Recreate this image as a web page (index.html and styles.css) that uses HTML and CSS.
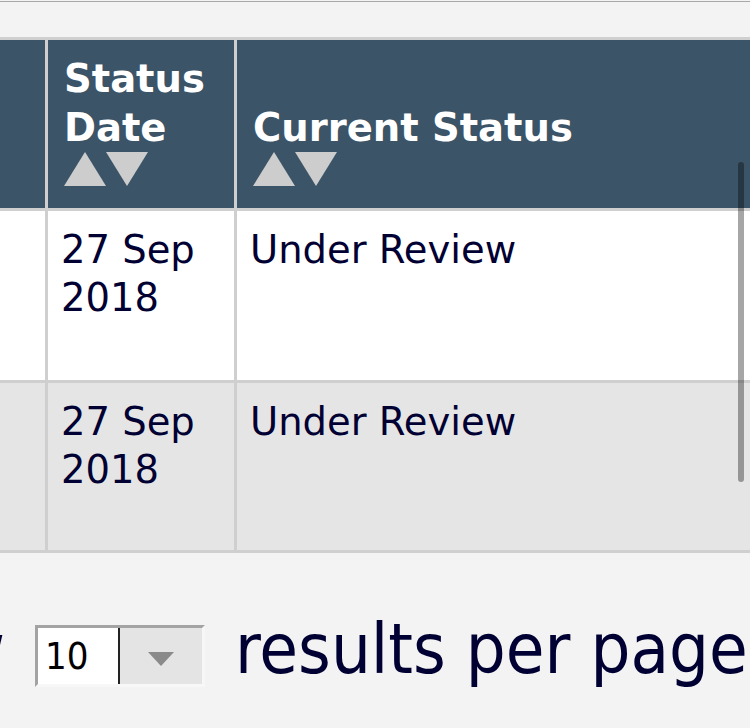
FILE: index.html
```html
<!DOCTYPE html>
<html>
<head>
<meta charset="utf-8">
<link rel="stylesheet" href="styles.css">
</head>
<body>
<div class="topline"></div>
<div class="viewport">
  <div class="table-wrap">
    <table class="grid">
      <thead>
        <tr>
          <th class="c1"><svg class="sort" width="84" height="34" viewBox="0 0 84 34"><polygon points="0,34 21,0 42,34"/><polygon points="42,0 84,0 63,34"/></svg></th>
          <th class="c2"><div class="th-text">Status<br>Date</div><svg class="sort" width="84" height="34" viewBox="0 0 84 34"><polygon points="0,34 21,0 42,34"/><polygon points="42,0 84,0 63,34"/></svg></th>
          <th class="c3"><div class="th-text">Current Status</div><svg class="sort" width="84" height="34" viewBox="0 0 84 34"><polygon points="0,34 21,0 42,34"/><polygon points="42,0 84,0 63,34"/></svg></th>
        </tr>
      </thead>
      <tbody>
        <tr class="row-odd">
          <td class="c1"></td>
          <td class="c2">27 Sep<br>2018</td>
          <td class="c3">Under Review</td>
        </tr>
        <tr class="row-even">
          <td class="c1"></td>
          <td class="c2">27 Sep<br>2018</td>
          <td class="c3">Under Review</td>
        </tr>
      </tbody>
    </table>
    <div class="scrollbar"></div>
  </div>
</div>
<div class="pager">
  <span class="show">Show</span>
  <div class="select">
    <div class="select-value">10</div>
    <div class="select-btn"><span class="caret"></span></div>
  </div>
  <span class="per-page">results per page</span>
</div>
</body>
</html>
```
FILE: styles.css
```css
html, body {
  margin: 0;
  padding: 0;
  background: #f3f3f3;
}
body {
  width: 750px;
  height: 728px;
  overflow: hidden;
  font-family: "DejaVu Sans", Verdana, sans-serif;
}
.topline {
  height: 1px;
  margin-top: 1px;
  background: #a9a9a9;
}
.viewport {
  overflow: hidden;
  padding-top: 35px;
}
.table-wrap {
  position: relative;
  width: 750px;
  overflow: hidden;
}
.grid {
  border-collapse: collapse;
  margin-left: -120px;
  width: 900px;
  border: 3px solid #cfcfcf;
  table-layout: fixed;
}
.grid .c1 { width: 136px; }
.grid .c2 { width: 160px; }
.grid .c3 { width: auto; }
.grid th, .grid td {
  border: 3px solid #cfcfcf;
  padding: 0 13px;
  text-align: left;
}
.grid th {
  background: #3b5467;
  color: #ffffff;
  font-weight: bold;
  font-size: 38.5px;
  line-height: 49px;
  vertical-align: bottom;
  height: 146px;
  padding: 0 10px 22px 16px;
}
.sort {
  display: block;
  fill: #cdcdcd;
  filter: blur(0.7px);
}
.grid td {
  font-size: 38.5px;
  line-height: 48px;
  color: #000033;
  vertical-align: top;
  padding-top: 15px;
}
.row-odd td { background: #ffffff; height: 154px; }
.row-even td { background: #e5e5e5; height: 152px; }
.scrollbar {
  position: absolute;
  left: 738px;
  top: 125px;
  width: 6px;
  height: 320px;
  border-radius: 3px;
  background: rgba(0, 0, 0, 0.35);
}
.pager {
  display: flex;
  align-items: flex-start;
  margin-top: 72px;
  height: 80px;
  font-family: "DejaVu Sans Condensed", "DejaVu Sans", sans-serif;
  color: #000033;
  font-size: 70px;
  line-height: 62px;
}
.show {
  width: 200px;
  margin-left: -195px;
  margin-top: -7px;
  text-align: right;
  flex: none;
}
.select {
  display: flex;
  flex: none;
  margin-left: 30px;
  width: 164px;
  height: 56px;
  border-style: solid;
  border-width: 3px;
  border-color: #a3a3a3 #f7f7f7 #f7f7f7 #a3a3a3;
  background: #e4e4e4;
}
.select-value {
  background: #ffffff;
  border-right: 2px solid #222222;
  color: #000000;
  font-size: 38px;
  line-height: 56px;
  padding-left: 7px;
  box-sizing: border-box;
  width: 82px;
}
.select-btn {
  flex: 1;
  display: flex;
  align-items: center;
  justify-content: center;
}
.caret {
  width: 0;
  height: 0;
  border-left: 13px solid transparent;
  border-right: 13px solid transparent;
  border-top: 14px solid #8a8a8a;
  margin-top: 6px;
}
.per-page {
  margin-left: 30px;
  margin-top: -7px;
  white-space: nowrap;
  flex: none;
}
```
